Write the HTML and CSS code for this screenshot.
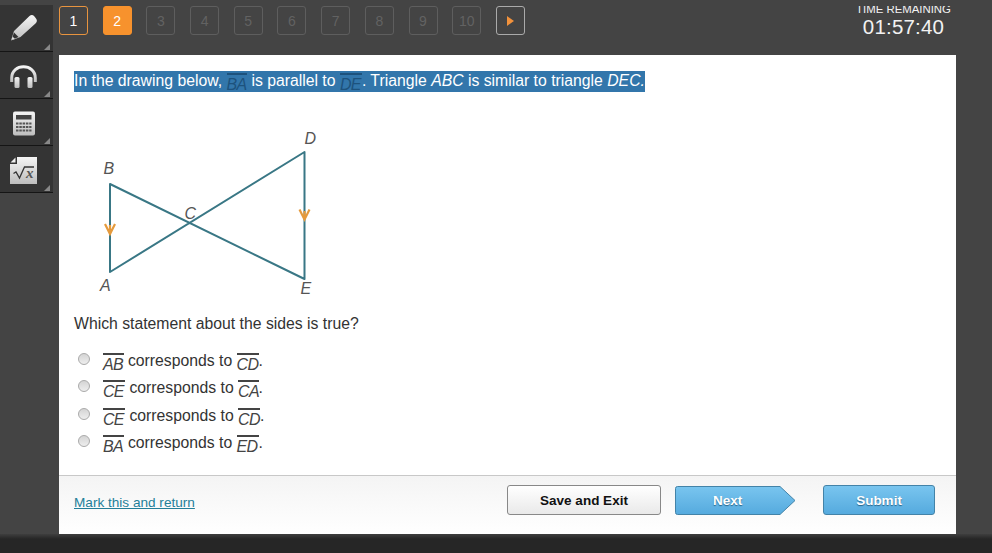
FILE: index.html
```html
<!DOCTYPE html>
<html lang="en">
<head>
<meta charset="utf-8">
<title>Quiz</title>
<link rel="stylesheet" href="styles.css">
</head>
<body>
<div class="app">
  <nav class="tools">
    <button class="tool" aria-label="Highlighter">
      <svg width="53" height="46" viewBox="0 0 53 46"><defs><linearGradient id="g" x1="0" y1="0" x2="0" y2="1"><stop offset="0" stop-color="#f5f5f5"/><stop offset="1" stop-color="#bdbdbd"/></linearGradient></defs><path d="M14 26 29.500 11Q32 9 34.500 11.500L36 13.500Q38 16 35.500 18.500L20.500 32 11 35.500Z" fill="url(#g)"/><path d="M14 27.500 18.500 32 11.500 35Z" fill="#343434"/><path d="m12.500 31.500 2.500 2.500-3.500 1z" fill="#ddd"/></svg>
    </button>
    <button class="tool" aria-label="Read aloud">
      <svg width="53" height="46" viewBox="0 0 53 46"><path d="M11.700 30V26C11.700 11 35.300 11 35.300 26V30" fill="none" stroke="url(#g)" stroke-width="3"/><rect x="14.500" y="25" width="5" height="11" rx="1.500" fill="url(#g)"/><rect x="27.500" y="25" width="5" height="11" rx="1.500" fill="url(#g)"/></svg>
    </button>
    <button class="tool" aria-label="Calculator">
      <svg width="53" height="46" viewBox="0 0 53 46"><rect x="13" y="12.500" width="22" height="24" rx="2" fill="url(#g)"/><path d="M16 16h15.500v4.500H16z" fill="#444"/><path d="M16 24.500h15.500M16 28h15.500M16 31.500h15.500" stroke="#555" stroke-width="2" stroke-dasharray="2.500 .8"/></svg>
    </button>
    <button class="tool" aria-label="Formulas">
      <svg width="53" height="46" viewBox="0 0 53 46"><path d="M17 11h20v27H10V18h7z" fill="url(#g)"/><path d="M10.500 16.500 15.500 11.500V16.500z" fill="#eee"/><path d="m13.500 27.500 2.500-1.500 3.500 6L24.500 21H34" fill="none" stroke="#333" stroke-width="1.300"/><text x="26" y="32" class="fx">x</text></svg>
    </button>
  </nav>
  <main class="main">
    <header class="top">
      <div class="pager">
        <span class="pg done">1</span><span class="pg now">2</span><span class="pg">3</span><span class="pg">4</span><span class="pg">5</span><span class="pg">6</span><span class="pg">7</span><span class="pg">8</span><span class="pg">9</span><span class="pg">10</span><span class="pg go"><svg width="9" height="12" viewBox="0 0 9 12"><path d="M1 1 8 6 1 11z" fill="#f2923c"/></svg></span>
      </div>
      <div class="timer"><div class="cap"><span>TIME REMAINING</span></div><div class="clock">01:57:40</div></div>
    </header>
    <section class="card">
      <div class="question">
        <p class="prompt"><span class="hl">In the drawing below, <span class="seg w20">BA</span> is parallel to <span class="seg w22">DE</span>. Triangle <i>ABC</i> is similar to triangle <i>DEC.</i></span></p>
        <svg class="figure" width="250" height="185" viewBox="90 120 250 185">
          <g fill="none" stroke="#397785" stroke-width="2" stroke-linejoin="round"><path d="M110 184 304.500 279V152L110 272Z"/></g>
          <g fill="none" stroke="#e59a3c" stroke-width="2.200"><path d="m105 224 5 10 5-10M110 225v8M299.500 209.500l5 10 5-10M304.500 211v8"/></g>
          <g class="lab"><text x="103.500" y="174">B</text><text x="100" y="291">A</text><text x="184.500" y="218.500">C</text><text x="304.500" y="143.500">D</text><text x="300.500" y="294">E</text></g>
        </svg>
        <p class="ask">Which statement about the sides is true?</p>
        <ul class="answers">
          <li><i class="radio"></i><span><span class="seg w20">AB</span> corresponds to <span class="seg w22">CD</span>.</span></li>
          <li><i class="radio"></i><span><span class="seg w22">CE</span> corresponds to <span class="seg w20">CA</span>.</span></li>
          <li><i class="radio"></i><span><span class="seg w22">CE</span> corresponds to <span class="seg w22">CD</span>.</span></li>
          <li><i class="radio"></i><span><span class="seg w20">BA</span> corresponds to <span class="seg w22">ED</span>.</span></li>
        </ul>
      </div>
      <footer class="foot">
        <a class="mark" href="#">Mark this and return</a>
        <button class="btn save">Save and Exit</button>
        <button class="btn next"><svg class="arrow" width="121" height="30" viewBox="0 0 121 30"><defs><linearGradient id="b" x1="0" y1="0" x2="0" y2="1"><stop offset="0" stop-color="#79c5ef"/><stop offset="1" stop-color="#55aade"/></linearGradient></defs><path d="M2.500.5H105L120 14.500 105 28.500H2.500Q.5 28.500.5 26.500V2.500Q.5.500 2.500.500Z" fill="url(#b)" stroke="#4383a8"/></svg><span>Next</span></button>
        <button class="btn submit">Submit</button>
      </footer>
    </section>
  </main>
</div>
<div class="base"></div>
</body>
</html>
```
FILE: styles.css
```css
* { box-sizing: border-box; }
body { margin: 0; height: 553px; overflow: hidden; background: #444; font-family: "Liberation Sans", Arial, sans-serif; color: #333; }
button { font-family: inherit; padding: 0; border: 0; }
p, ul { margin: 0; padding: 0; }
.app { display: flex; height: 534px; gap: 6px; }
.tools { width: 53px; padding-top: 5px; flex: none; }
.tool { display: block; position: relative; width: 53px; height: 47px; background: #343434; border-bottom: 1px solid #151515; }
.tool svg { display: block; }
.tool::after { content: ""; position: absolute; right: 3px; bottom: 1px; border-left: 6px solid transparent; border-bottom: 6px solid #888; }
.fx { font: italic bold 15px "Liberation Serif", serif; fill: #555; }
.main { width: 897px; }
.top { height: 55px; display: flex; justify-content: space-between; padding-top: 6px; }
.pager { display: flex; gap: 14.7px; }
.pg { width: 29px; height: 29px; border: 1px solid #5e5e5e; border-radius: 3px; display: flex; align-items: center; justify-content: center; font-size: 14px; color: #626262; }
.done { border-color: #e8943f; color: #fff; }
.now { border-color: #f7922d; background: #f7922d; color: #fff; }
.go { border-color: #aaa; }
.timer { width: 105px; text-align: center; color: #f2f2f2; white-space: nowrap; }
.cap { height: 8px; overflow: hidden; display: flex; align-items: flex-end; justify-content: center; font-size: 11.4px; line-height: 13px; }
.cap span { margin-bottom: -2px; }
.clock { font-size: 20.5px; line-height: 24px; letter-spacing: .2px; margin-top: 1px; }
.card { height: 479px; background: #fff; display: flex; flex-direction: column; }
.question { height: 420px; padding: 16px 15px 0; font-size: 15.78px; }
.prompt { height: 49px; line-height: 20px; white-space: nowrap; }
.hl { display: inline-block; height: 21px; background: #3276ab; color: #fff; }
.seg { display: inline-block; height: 18px; border-top: 2px solid #444; line-height: 19px; font-style: italic; font-size: 16px; letter-spacing: -.7px; vertical-align: -4px; margin: -3px 0; color: #444; white-space: nowrap; }
.hl .seg { border-color: #1d527d; color: #1d527d; }
.w20 { width: 20.5px; }
.w22 { width: 22px; }
.figure { display: block; margin-left: 16px; }
.lab { font-style: italic; font-size: 16px; fill: #555; }
.ask { line-height: 20px; margin-top: 9px; }
.answers { list-style: none; margin-top: 13px; }
.answers li { display: flex; align-items: flex-start; height: 27.4px; line-height: 27px; }
.radio { width: 12px; height: 12px; margin: 6px 13px 0 4px; border: 1px solid #aaa; border-radius: 50%; background: linear-gradient(#d4d4d4, #eee); }
.foot { height: 59px; border-top: 1px solid #c8c8c8; background: linear-gradient(#f4f4f4, #fff); display: flex; align-items: flex-start; padding: 9px 21px 0 15px; }
.mark { font-size: 13.6px; line-height: 18px; color: #247f99; width: 433px; margin-top: 9px; }
.btn { font-size: 13.5px; font-weight: bold; height: 30px; }
.save { width: 154px; border: 1px solid #888; border-radius: 3px; background: linear-gradient(#fff, #e9e9e9); color: #111; }
.next { position: relative; width: 121px; margin: 1px 27px 0 14px; background: none; color: #fff; text-align: left; padding: 0 0 2px 38px; text-shadow: 0 1px 1px #28658a; }
.arrow { position: absolute; left: 0; top: 0; }
.next span { position: relative; }
.submit { width: 112px; border: 1px solid #4383a8; border-radius: 3px; background: linear-gradient(#79c5ef, #55aade); color: #fff; text-shadow: 0 1px 1px #28658a; }
.base { height: 19px; background: linear-gradient(#3e3e3e, #262626 5px); }
```
